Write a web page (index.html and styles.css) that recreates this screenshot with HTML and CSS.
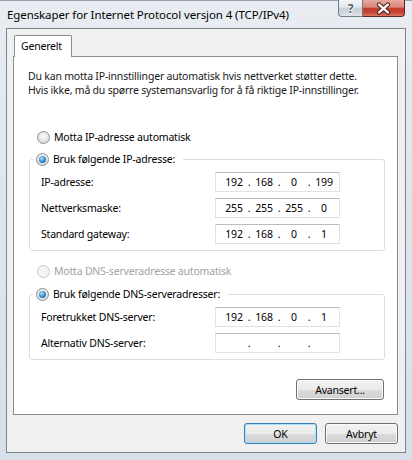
FILE: index.html
```html
<!DOCTYPE html>
<html lang="no">
<head>
    <meta charset="UTF-8">
    <meta name="viewport" content="width=device-width, initial-scale=1.0">
    <title>Egenskaper for Internet Protocol versjon 4 (TCP/IPv4)</title>
    <link rel="stylesheet" href="styles.css">
</head>
<body>
<div class="window">
    <div class="titlebar">
        <span class="title">Egenskaper for Internet Protocol versjon 4 (TCP/IPv4)</span>
        <div class="caption-buttons">
            <span class="cap-btn help">?</span>
            <span class="cap-btn close">
                <svg width="42" height="17" viewBox="0 0 42 17">
                    <path d="M16.5 4.5 L25.5 12.5 M25.5 4.5 L16.5 12.5" stroke="#4a1f1b" stroke-width="4.6" stroke-linecap="round"/>
                    <path d="M16.5 4.5 L25.5 12.5 M25.5 4.5 L16.5 12.5" stroke="#ffffff" stroke-width="2.4" stroke-linecap="round"/>
                </svg>
            </span>
        </div>
    </div>

    <div class="client">
        <div class="tabs">
            <span class="tab">Generelt</span>
        </div>

        <div class="panel">
            <p class="intro">Du kan motta IP-innstillinger automatisk hvis nettverket støtter dette.<br>Hvis ikke, må du spørre systemansvarlig for å få riktige IP-innstillinger.</p>

            <label class="option"><span class="radio"></span>Motta IP-adresse automatisk</label>

            <fieldset class="group">
                <legend><span class="radio on"></span>Bruk følgende IP-adresse:</legend>
                <div class="field">
                    <span>IP-adresse:</span>
                    <span class="ip"><span>192</span><i>.</i><span>168</span><i>.</i><span>0</span><i>.</i><span>199</span></span>
                </div>
                <div class="field">
                    <span>Nettverksmaske:</span>
                    <span class="ip"><span>255</span><i>.</i><span>255</span><i>.</i><span>255</span><i>.</i><span>0</span></span>
                </div>
                <div class="field">
                    <span>Standard gateway:</span>
                    <span class="ip"><span>192</span><i>.</i><span>168</span><i>.</i><span>0</span><i>.</i><span>1</span></span>
                </div>
            </fieldset>

            <label class="option disabled"><span class="radio"></span>Motta DNS-serveradresse automatisk</label>

            <fieldset class="group dns">
                <legend><span class="radio on"></span>Bruk følgende DNS-serveradresser:</legend>
                <div class="field">
                    <span>Foretrukket DNS-server:</span>
                    <span class="ip"><span>192</span><i>.</i><span>168</span><i>.</i><span>0</span><i>.</i><span>1</span></span>
                </div>
                <div class="field">
                    <span>Alternativ DNS-server:</span>
                    <span class="ip"><span></span><i>.</i><span></span><i>.</i><span></span><i>.</i><span></span></span>
                </div>
            </fieldset>

            <div class="panel-actions">
                <button type="button" class="btn wide">Avansert...</button>
            </div>
        </div>

        <div class="dialog-actions">
            <button type="button" class="btn default">OK</button>
            <button type="button" class="btn">Avbryt</button>
        </div>
    </div>
</div>
</body>
</html>
```

FILE: styles.css
```css
body {
    margin: 0;
    padding: 0;
    font-family: "Noto Sans", "Open Sans", sans-serif;
    font-size: 10.5px;
    letter-spacing: -0.2px;
    color: #000;
}

.window {
    width: 412px;
    height: 460px;
    background: linear-gradient(to bottom, #e9edf2 0%, #dfe6ee 40%, #d7e0e9 100%);
    box-sizing: border-box;
    overflow: hidden;
}

/* title bar */
.titlebar {
    height: 28px;
    display: flex;
    justify-content: space-between;
    align-items: flex-start;
    box-shadow: inset 0 1px 0 #9aa2ab;
}

.title {
    padding: 7px 0 0 7px;
    font-size: 11.5px;
    letter-spacing: -0.1px;
    line-height: 16px;
    color: #000;
}

.caption-buttons {
    display: flex;
    margin-right: 7px;
}

.cap-btn {
    height: 17px;
    box-sizing: border-box;
    border: 1px solid #6f7b89;
    border-top: none;
    display: flex;
    justify-content: center;
    align-items: center;
}

.help {
    width: 25px;
    border-radius: 0 0 0 4px;
    background: linear-gradient(to bottom, #f3f5f7 0%, #e3e7ec 45%, #cbd1d8 50%, #d2d8df 80%, #e0e5ea 100%);
    color: #55606b;
    font-size: 12px;
    font-weight: bold;
    line-height: 15px;
    text-shadow: 0 0 2px #fff, 0 1px 0 #fff;
}

.close {
    width: 42px;
    border-color: #5a2a26;
    border-left: none;
    border-radius: 0 0 4px 0;
    background: linear-gradient(to bottom, #e9aaa1 0%, #d98679 45%, #c4402f 52%, #c43f30 75%, #dd7562 100%);
}

/* client area */
.client {
    margin: 0 6px 0 6px;
    padding: 6px 7px 8px 6px;
    background: #f0f0f0;
    border: 1px solid #7b838c;
}

.tabs {
    display: flex;
    padding-left: 1px;
}

.tab {
    position: relative;
    z-index: 1;
    height: 21px;
    margin-bottom: -1px;
    padding: 0 9px 0 6px;
    line-height: 20px;
    background: #fff;
    border: 1px solid #898c95;
    border-bottom: none;
    border-radius: 2px 2px 0 0;
}

.panel {
    background: #fff;
    border: 1px solid #898c95;
    padding: 0 12px 14px 14px;
}

.intro {
    margin: 12px 0 0 0;
    line-height: 14px;
    white-space: nowrap;
    color: #1a1a1a;
}

.option {
    display: flex;
    align-items: center;
    gap: 4px;
    height: 16px;
    margin: 32px 0 0 9px;
}

.option.disabled {
    margin-top: 12px;
    color: #a3a3a3;
}

.radio {
    width: 13px;
    height: 13px;
    box-sizing: border-box;
    border-radius: 50%;
    border: 1px solid #8b8d90;
    background: radial-gradient(circle at 50% 40%, #fbfbfb 0%, #e6e6e6 55%, #cfcfcf 100%);
    display: flex;
    justify-content: center;
    align-items: center;
    flex: none;
}

.radio.on::after {
    content: "";
    width: 7px;
    height: 7px;
    border-radius: 50%;
    background: radial-gradient(circle at 40% 35%, #b6e3fb 0%, #3f95d6 45%, #0f4f91 100%);
}

.disabled .radio {
    border-color: #c6c8ca;
    background: #f4f4f4;
}

/* group boxes */
.group {
    margin: 6px 0 0 1px;
    padding: 5px 44px 6px 11px;
    min-width: 0;
    border: 1px solid #d5dfe5;
    border-radius: 3px;
}

.group.dns {
    margin-top: 7px;
}

.group legend {
    display: flex;
    align-items: center;
    gap: 4px;
    height: 16px;
    margin-left: -8px;
    padding: 0 8px 0 3px;
}

.field {
    display: flex;
    justify-content: space-between;
    align-items: center;
    height: 20px;
    margin-top: 6px;
}

.field:first-of-type {
    margin-top: 0;
}

.ip {
    width: 125px;
    height: 20px;
    box-sizing: border-box;
    display: flex;
    align-items: center;
    padding-left: 6px;
    border: 1px solid #dfe3e8;
    border-top-color: #b9bdc3;
    background: #fff;
}

.ip span {
    width: 24px;
    text-align: center;
}

.ip i {
    width: 6px;
    font-style: normal;
    text-align: center;
}

/* buttons */
.panel-actions {
    display: flex;
    justify-content: flex-end;
    margin: 19px 1px 0 0;
}

.dialog-actions {
    display: flex;
    justify-content: flex-end;
    gap: 8px;
    margin-top: 8px;
}

.btn {
    width: 73px;
    height: 21px;
    padding: 0;
    font-family: "Noto Sans", "Open Sans", sans-serif;
    font-size: 10.5px;
    letter-spacing: -0.2px;
    color: #000;
    border: 1px solid #707070;
    border-radius: 3px;
    background: linear-gradient(to bottom, #f2f2f2 0%, #ebebeb 50%, #dddddd 51%, #cfcfcf 100%);
    box-shadow: inset 0 0 0 1px #fbfbfb;
}

.btn.wide {
    width: 88px;
}

.btn.default {
    border-color: #3c7fb1;
    box-shadow: inset 0 0 0 1px #a6e0f8;
}
```
